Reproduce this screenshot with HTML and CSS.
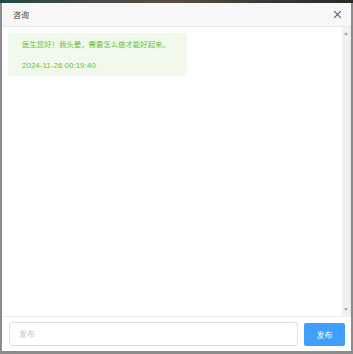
FILE: index.html
```html
<!DOCTYPE html>
<html>
<head>
<meta charset="utf-8">
<link rel="stylesheet" href="styles.css">
</head>
<body>
<div class="backdrop-top"></div>
<div class="dialog">
  <div class="header">
    <span class="title">咨询</span>
    <svg class="close" width="9" height="9" viewBox="0 0 9 9"><path d="M1.2 1.2L7.8 7.8M7.8 1.2L1.2 7.8" stroke="#5a5a66" stroke-width="1.1"/></svg>
  </div>
  <div class="body">
    <div class="content">
      <div class="bubble">
        <div class="row">医生您好！我头晕，需要怎么做才能好起来。</div>
        <div class="row date">2024-11-26 00:19:40</div>
      </div>
    </div>
    <div class="scrollbar">
      <span class="arrow up"></span>
      <span class="arrow down"></span>
    </div>
  </div>
  <div class="footer">
    <div class="input">发布</div>
    <div class="btn">发布</div>
  </div>
</div>
</body>
</html>
```
FILE: styles.css
```css
html, body { margin: 0; padding: 0; }
body {
  width: 353px; height: 354px; overflow: hidden;
  background: #8c8c8c;
  font-family: "Noto Sans CJK SC", "Liberation Sans", sans-serif;
  position: relative;
}
.backdrop-top {
  height: 3px;
  background: linear-gradient(90deg, #1f4a44 0%, #4a4a46 25%, #5a4a44 50%, #3a3a34 75%, #2a2a24 100%);
}
.dialog {
  margin: 0 2px;
  height: 348px;
  background: #fff;
  display: flex; flex-direction: column;
}
.header {
  height: 23px;
  background: #f7f7f7;
  border-bottom: 1px solid #e6e6e6;
  display: flex; align-items: center; justify-content: space-between;
  padding: 0 9px 0 11px;
}
.title { font-size: 8px; color: #444; }
.close { display: block; }
.body { flex: 1; display: flex; min-height: 0; }
.content { flex: 1; padding: 6px 6px; }
.bubble { width: 179px; background: #f0f9eb; border-radius: 2px; }
.row {
  height: 21px; line-height: 21px;
  padding-left: 14px;
  font-size: 7.4px; color: #67c23a;
}
.row + .row { border-top: 1px solid #f4fbf0; }
.row.date { font-family: "Liberation Sans", sans-serif; font-size: 8px; }
.scrollbar {
  width: 8px; background: #f1f1f1;
  display: flex; flex-direction: column; justify-content: space-between; align-items: center;
  padding: 5px 0 5px;
  border-right: 1px solid #e4e4e4;
}
.arrow { width: 0; height: 0; border-left: 2.5px solid transparent; border-right: 2.5px solid transparent; }
.up { border-bottom: 3px solid #a8a8a8; }
.down { border-top: 3px solid #a8a8a8; }
.footer {
  height: 34px;
  border-top: 1px solid #eeeeee;
  display: flex; align-items: center;
  padding: 0 6px 0 7px;
  gap: 6px;
}
.input {
  flex: 1; height: 22px; line-height: 22px;
  border: 1px solid #dcdfe6; border-radius: 3px;
  padding-left: 9px;
  font-size: 8px; color: #c0c4cc;
}
.btn {
  width: 41px; height: 23px; line-height: 23px;
  background: #409eff; border-radius: 2px;
  color: #fff; font-size: 8px; text-align: center;
}
```
